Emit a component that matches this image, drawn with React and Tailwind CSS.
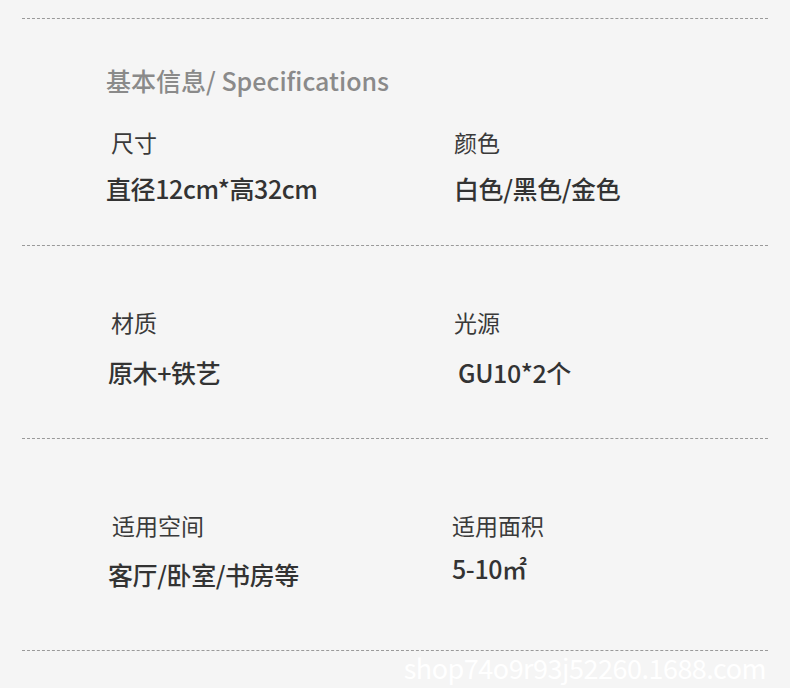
const font = { fontFamily: '"Noto Sans CJK SC", "Noto Sans", sans-serif' }

function Spec({ label, value, gap = 'mt-[16px]', labelClass = '', valueClass = '' }) {
  return (
    <div>
      <div className={`text-[23px] leading-[30px] text-[#3a3a3a] ${labelClass}`}>{label}</div>
      <div className={`${gap} text-[25px] leading-[32px] font-medium text-[#333] tracking-[-0.4px] ${valueClass}`}>{value}</div>
    </div>
  )
}

export default function App() {
  return (
    <div className="w-[790px] h-[697px] bg-[#f5f5f5] flex flex-col" style={font}>
      <div className="h-[18px]" />

      {/* block 1 */}
      <div className="mx-[22px] border-t border-dashed border-[#9a9a9a]" />
      <div className="pt-[45px] pb-[41px]">
        <div className="pl-[106px] text-[25px] leading-[32px] font-medium text-[#8a8a8a]">基本信息/ Specifications</div>
        <div className="grid grid-cols-[348px_1fr] pl-[106px] mt-[31px]">
          <Spec label="尺寸" value="直径12cm*高32cm" gap="mt-[15px]" labelClass="ml-[5px]" />
          <Spec label="颜色" value="白色/黑色/金色" gap="mt-[15px]" />
        </div>
      </div>

      {/* block 2 */}
      <div className="mx-[22px] border-t border-dashed border-[#9a9a9a]" />
      <div className="pt-[61px] pb-[50px] grid grid-cols-[346px_1fr] pl-[108px]">
        <Spec label="材质" value="原木+铁艺" gap="mt-[19px]" labelClass="ml-[3px]" />
        <Spec label="光源" value="GU10*2个" gap="mt-[19px]" valueClass="ml-[4px]" />
      </div>

      {/* block 3 */}
      <div className="mx-[22px] border-t border-dashed border-[#9a9a9a]" />
      <div className="pt-[71px] pb-[60px] grid grid-cols-[344px_1fr] pl-[108px]">
        <Spec label="适用空间" value="客厅/卧室/书房等" gap="mt-[18px]" labelClass="ml-[4px]" />
        <Spec label="适用面积" value="5-10㎡" gap="mt-[12px]" />
      </div>

      <div className="mx-[22px] border-t border-dashed border-[#9a9a9a]" />
      <div className="h-[37px] flex justify-end pr-[24px]">
        <span className="text-[27px] leading-[34px] text-white tracking-[-0.5px]">shop74o9r93j52260.1688.com</span>
      </div>
      <div className="flex-1 bg-white" />
    </div>
  )
}
